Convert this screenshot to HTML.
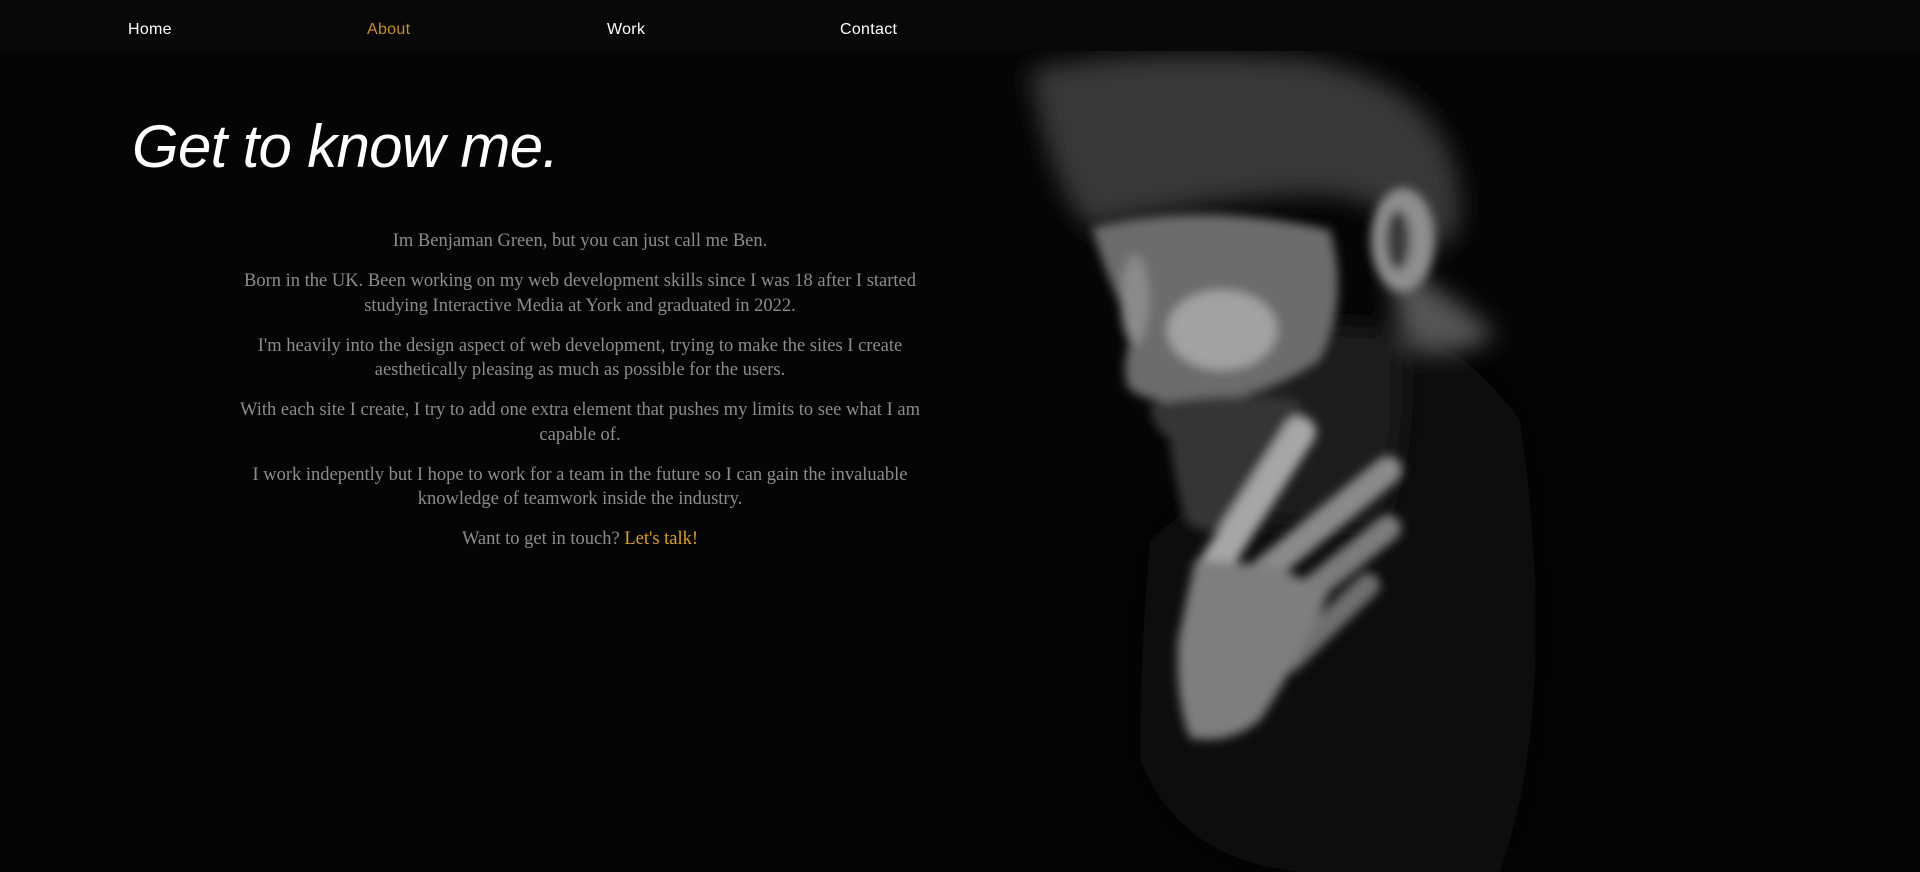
<!DOCTYPE html>
<html><head><meta charset="utf-8"><style>
html,body{margin:0;padding:0;background:#050505;width:1920px;height:872px;overflow:hidden;}
body{position:relative;font-family:"Liberation Sans",sans-serif;}
nav{position:absolute;left:0;top:0;width:1920px;height:51px;background:#080808;z-index:3;}
nav a{position:absolute;top:21px;font-size:16px;color:#fff;text-decoration:none;letter-spacing:0.3px;}
h1{position:absolute;left:132px;top:107px;margin:0;font-size:60px;font-weight:normal;font-style:italic;color:#fff;letter-spacing:-0.7px;z-index:2;line-height:80px;}
.txt{position:absolute;left:234px;width:692px;top:229px;text-align:center;font-family:"Liberation Serif",serif;font-size:18.5px;line-height:24.5px;color:#8c8c8c;z-index:2;}
.txt p{margin:0 0 15.5px 0;}
.txt span{color:#d9a21a;}
svg{position:absolute;left:0;top:0;z-index:1;}
</style></head><body>
<svg width="1920" height="872">
<defs>
<filter id="b" filterUnits="userSpaceOnUse" x="900" y="0" width="1020" height="872"><feGaussianBlur stdDeviation="12"/></filter>
<filter id="b3" filterUnits="userSpaceOnUse" x="900" y="0" width="1020" height="872"><feGaussianBlur stdDeviation="30"/></filter>
<filter id="b2" filterUnits="userSpaceOnUse" x="900" y="0" width="1020" height="872"><feGaussianBlur stdDeviation="5"/></filter>
</defs>
<g filter="url(#b3)">
<path d="M1150 540 Q1140 650 1140 760 Q1180 860 1300 872 L1500 872 Q1560 700 1520 420 Q1460 340 1400 330 Z" fill="#080808"/>
</g>
<g filter="url(#b)">
<path d="M1030 70 Q1120 48 1300 58 Q1430 80 1455 170 Q1470 230 1440 250 Q1380 190 1300 195 Q1200 200 1090 228 Q1050 190 1030 70 Z" fill="#383838"/>
<path d="M1250 330 Q1330 320 1400 330 Q1410 430 1380 520 Q1300 530 1250 520 Z" fill="#1c1c1c"/>
<path d="M1390 260 Q1460 300 1495 335 Q1460 360 1410 350 Q1390 300 1390 260 Z" fill="#555"/>
</g>
<g filter="url(#b2)">
<path d="M1092 228 Q1200 200 1330 230 Q1350 300 1320 360 Q1270 395 1200 405 Q1150 405 1128 388 Q1120 360 1135 330 Q1110 290 1092 228 Z" fill="#6c6c6c"/>
<ellipse cx="1222" cy="330" rx="55" ry="40" fill="#a2a2a2"/>
<ellipse cx="1135" cy="300" rx="14" ry="45" fill="#8a8a8a"/>
<path d="M1150 405 Q1230 390 1300 400 Q1300 470 1240 520 Q1200 540 1185 520 Q1172 470 1170 440 Q1150 425 1150 405 Z" fill="#343434"/>
<ellipse cx="1403" cy="240" rx="32" ry="52" fill="#8e8e8e"/>
<ellipse cx="1398" cy="240" rx="12" ry="30" fill="#3a3a3a"/>
<g stroke-linecap="round" fill="none">
<path d="M1300 432 L1215 565" stroke="#a6a6a6" stroke-width="32"/>
<path d="M1388 470 L1260 575" stroke="#8a8a8a" stroke-width="28"/>
<path d="M1388 528 L1280 615" stroke="#7c7c7c" stroke-width="26"/>
<path d="M1368 585 L1290 660" stroke="#6e6e6e" stroke-width="24"/>
</g>
<path d="M1195 560 L1270 565 L1330 590 Q1300 660 1260 720 Q1230 745 1190 738 Q1175 700 1178 640 Z" fill="#7e7e7e"/>
</g>
</svg>
<nav>
<a style="left:128px">Home</a>
<a style="left:367px;color:#c8901a">About</a>
<a style="left:607px">Work</a>
<a style="left:840px">Contact</a>
</nav>
<h1>Get to know me.</h1>
<div class="txt">
<p>Im Benjaman Green, but you can just call me Ben.</p>
<p>Born in the UK. Been working on my web development skills since I was 18 after I started studying Interactive Media at York and graduated in 2022.</p>
<p>I'm heavily into the design aspect of web development, trying to make the sites I create aesthetically pleasing as much as possible for the users.</p>
<p>With each site I create, I try to add one extra element that pushes my limits to see what I am capable of.</p>
<p>I work indepently but I hope to work for a team in the future so I can gain the invaluable knowledge of teamwork inside the industry.</p>
<p>Want to get in touch? <span>Let's talk!</span></p>
</div>
</body></html>
